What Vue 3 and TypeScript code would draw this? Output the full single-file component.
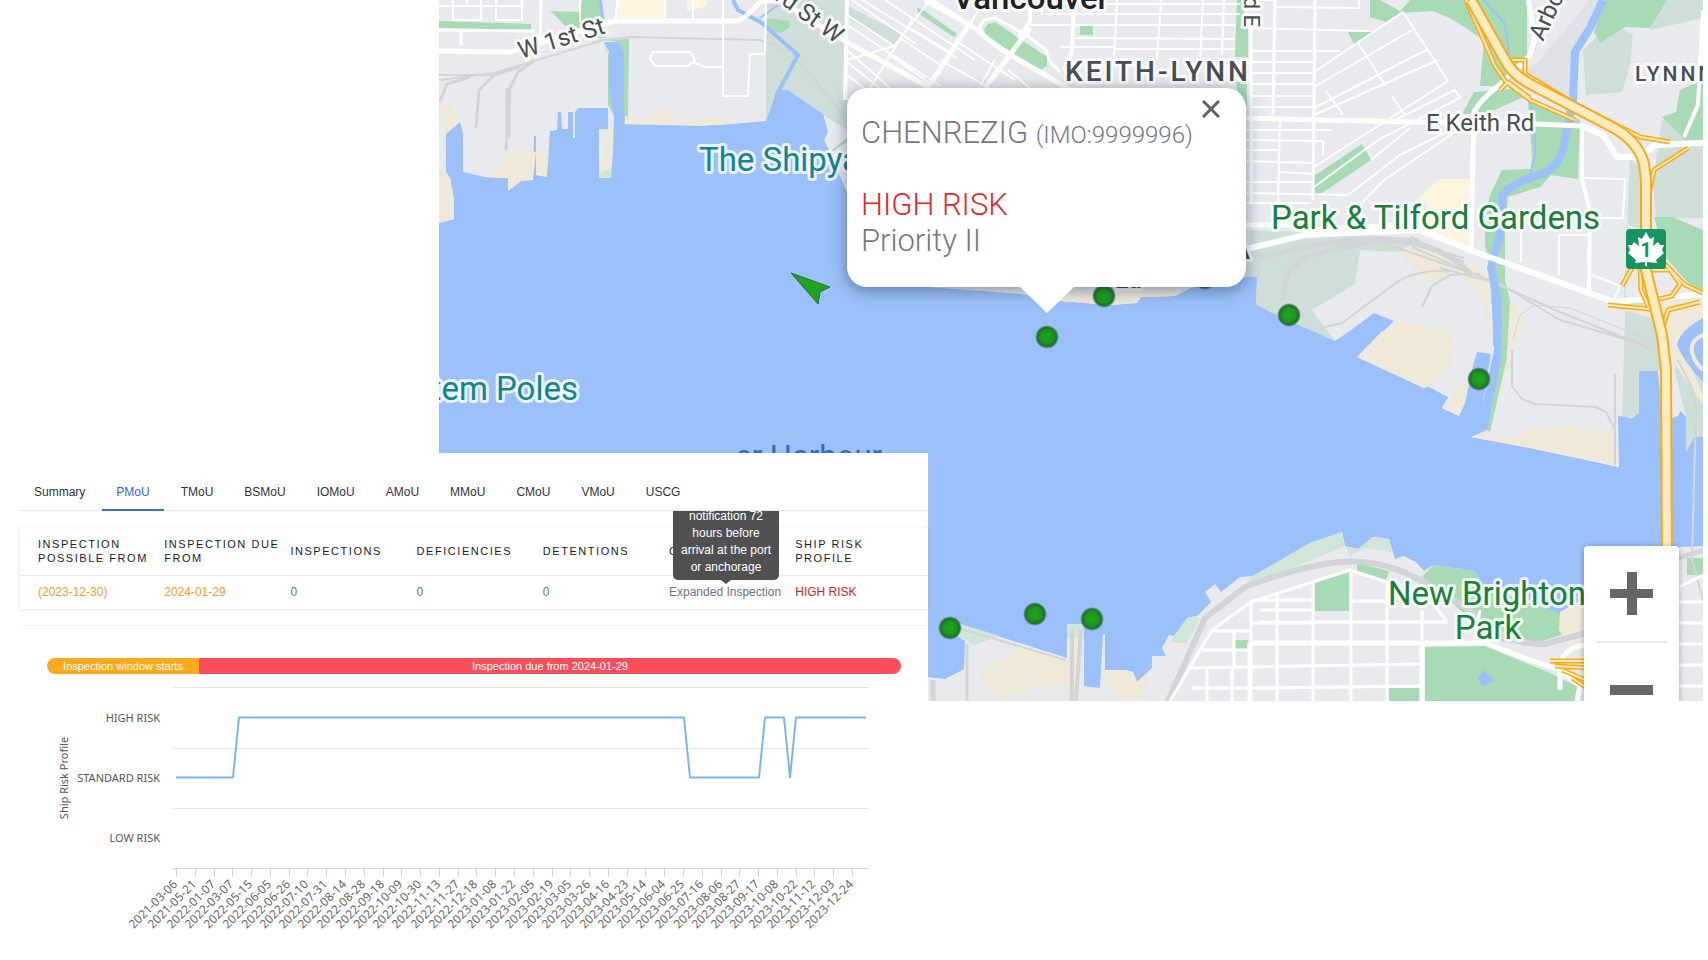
<script setup lang="ts">
import { ref } from 'vue'

interface Shape {
  d: string
}
interface Road extends Shape {
  w: number
}

const tabs = ['Summary', 'PMoU', 'TMoU', 'BSMoU', 'IOMoU', 'AMoU', 'MMoU', 'CMoU', 'VMoU', 'USCG']
const activeTab = ref('PMoU')
const popupOpen = ref(true)

const water =
  'M439 223L454 219L454 200L450 178L446 172L446 134L460 122L463 134L463 172L485 177L508 178L508 191L521 181L533 180L534 136L536 136L536 175L547 177L550 131L557 130L558 112L561 112L562 129L568 129L568 112L573 112L573 138L575 138L575 112L578 108L608 108L608 129L599 129L599 177L611 178L613 150L614 117L609 90L609 52L604 42L619 42L624 52L624 124L660 125L720 125L766 121L777 90L788 90L823 114L828 132L824 140L830 152L850 200L900 285L1020 294L1060 301L1110 305L1137 303L1141 297L1175 296L1193 287L1215 283L1247 277L1257 277L1256 304L1270 312L1335 341L1347 333L1374 313L1394 321L1385 333L1382 331L1357 357L1424 388L1427 386L1448 397L1442 408L1459 416L1465 403L1473 365L1477 352L1491 354L1482 408L1494 350L1491 290L1488 270L1494 268L1502 310L1501 360L1487 430L1471 437L1535 449L1619 467L1618 416L1632 418L1639 413L1639 371L1658 371L1662 418L1672 418L1678 416L1681 411L1686 417L1686 453L1694 437L1703 437L1703 546L1679 547L1590 602L1560 614L1500 587L1482 584L1475 571L1433 565L1424 571L1416 562L1404 556L1395 559L1389 539L1373 537L1358 549L1345 546L1342 532L1310 543L1253 576L1240 577L1221 592L1215 584L1205 592L1211 602L1197 616L1187 618L1174 636L1169 635L1162 648L1166 656L1152 656L1152 668L1137 682L1133 672L1126 670L1105 670L1105 634L1103 634L1100 688L1084 686L1084 624L1067 624L1067 658L960 624L956 635L965 641L964 669L945 679L928 677L439 677Z'

const paleGreen: Shape[] = [
  { d: 'M766 0H847V130L828 118L788 90L777 90L766 121Z' },
  { d: 'M846 5L905 36L894 45L847 18Z' },
  { d: 'M1250 230L1310 232L1420 238L1400 252L1360 250L1355 284L1312 310L1335 341L1270 312L1256 304L1257 277L1246 277Z' },
  { d: 'M1583 50L1613 22L1633 35L1630 65L1622 92L1586 95Z' },
  { d: 'M1662 120L1703 110V218L1656 218L1653 180Z' },
  { d: 'M1630 160L1645 170V230L1628 225L1622 418L1640 415V371H1662L1655 300L1624 300Z' },
  { d: 'M1638 0H1703V18L1650 30Z' },
  { d: 'M1686 417L1675 371L1676 330L1703 380V437L1694 437L1686 453Z' }
]

const mint: Shape[] = [
  { d: 'M1253 576L1310 543L1342 532L1345 546L1300 565L1245 585Z' },
  { d: 'M1345 546L1358 549L1373 537L1389 539L1392 552L1366 548L1350 556Z' },
  { d: 'M956 635L960 624L1000 636L974 645Z' },
  { d: 'M1067 624H1084V638H1067Z' },
  { d: 'M1187 618L1197 616L1200 620L1186 644L1170 642Z' },
  { d: 'M599 173L611 168V178H599Z' }
]

const sand: Shape[] = [
  { d: 'M442 97L450 102L459 121L446 134L446 172L450 178L454 200V219L439 223V176L444 165Z' },
  { d: 'M485 177L512 153L547 151V177L536 175V152L533 180L521 181L508 191V178Z' },
  { d: 'M608 130L613 130L611 168L600 173Z' },
  { d: 'M625 116L642 121L665 107L680 124L713 116L740 123L700 126L625 124Z' },
  { d: 'M1060 294L1100 291L1180 290L1175 296L1141 297L1137 303L1110 305L1060 301Z' },
  { d: 'M1357 357L1394 321L1447 328L1454 346L1450 368L1434 385L1424 388Z' },
  { d: 'M1442 408L1462 382L1470 378L1459 416Z' },
  { d: 'M1400 252L1424 238L1490 274L1491 350L1482 408L1492 345L1480 295L1460 275L1428 284Z' },
  { d: 'M1471 437L1520 436L1524 430L1566 426L1600 433L1613 426L1619 467L1535 449Z' },
  { d: 'M1510 300L1523 320L1515 350L1512 378L1506 370Z' },
  { d: 'M1615 308L1703 298V318L1680 340L1703 395V405L1672 360L1660 320Z' },
  { d: 'M979 676L1019 646L1067 660V686H1040L1000 700Z' },
  { d: 'M1067 638H1078V700H1067Z' },
  { d: 'M1105 670L1133 672L1137 682L1148 672L1143 698L1124 699L1103 684Z' },
  { d: 'M1172 643H1186L1174 652Z' },
  { d: 'M1560 612L1590 595V670L1572 648L1559 630Z' }
]

const retail: Shape[] = [
  { d: 'M619 0H667L664 18H619Z' },
  { d: 'M687 0H707V6L687 11Z' },
  { d: 'M1440 179H1470V246L1420 230L1428 205L1418 198Z' }
]

const parks: Shape[] = [
  { d: 'M439 21L531 24V30L439 28Z' },
  { d: 'M582 0H602L606 38H595L592 30L565 26L560 20L550 11L580 12Z' },
  { d: 'M604 40L629 39L628 118L624 124L624 60L618 42Z' },
  { d: 'M602 42L609 54V90L613 90V114L608 105V54Z' },
  { d: 'M766 18L789 21L790 27L781 33L768 30Z' },
  { d: 'M847 142L828 154L832 150L847 138Z' },
  { d: 'M917 8L922 9L957 34L954 37L918 13Z' },
  { d: 'M984 29L988 24L995 22L1047 57V66L1040 70L1034 69L986 38Z' },
  { d: 'M1080 26H1093V35H1080Z' },
  { d: 'M1237 0H1244V12L1240 28H1248V57H1235Z M1236 82H1247V105H1240Z' },
  { d: 'M1370 0H1380L1402 12L1386 22L1370 17Z' },
  { d: 'M1348 32H1372L1354 44Z' },
  { d: 'M1400 12L1410 0H1527V60L1515 70L1508 86L1480 86L1484 40L1472 32L1450 18L1432 11L1400 13Z' },
  { d: 'M1474 92L1520 88L1528 95L1490 112L1462 114Z' },
  { d: 'M1528 100L1570 115L1580 120L1578 179L1551 175L1540 187L1508 197L1505 230V280L1510 300V345L1490 432L1487 430L1500 350L1497 300L1485 245V225L1490 195L1502 170L1533 169Z' },
  { d: 'M1594 32L1605 0H1667L1650 28L1625 27L1600 43Z' },
  { d: 'M1314 176L1362 144L1371 160L1328 189L1314 197Z' },
  { d: 'M1662 117L1676 112L1680 90L1703 80V140H1685Z' },
  { d: 'M1654 217H1672L1703 230V290L1690 285L1666 258Z' },
  { d: 'M1422 577L1433 565L1475 571L1482 584L1520 600L1560 612L1570 632L1530 645L1490 640L1450 600Z' },
  { d: 'M1425 647L1485 646L1550 673L1580 688L1576 701H1425Z' },
  { d: 'M1315 582L1349 572V611H1315Z' },
  { d: 'M1357 563L1389 571L1386 580L1357 571Z' },
  { d: 'M1389 688H1420V701H1389Z' },
  { d: 'M1235 640H1248L1247 649H1235Z' },
  { d: 'M1176 686L1178 687L1170 701H1166Z' },
  { d: 'M1687 558H1703V575H1687Z' }
]

const rails: Road[] = [
  { d: 'M439 80L495 73L603 40L630 37L760 40L790 52L800 63L846 118', w: 2 },
  { d: 'M439 75L495 75L520 67', w: 2 },
  { d: 'M439 103L447 84L470 77M476 128L479 90L495 74M506 150L510 88L518 72L535 60', w: 3 },
  { d: 'M508 137V88', w: 5 },
  { d: 'M1380 242L1480 276L1560 312L1650 348M1440 268L1500 284L1560 320L1628 340', w: 2 },
  { d: 'M1260 258Q1320 240 1380 240T1470 274', w: 6 },
  { d: 'M1284 300Q1280 270 1310 255L1380 240', w: 5 },
  { d: 'M1320 328L1342 323L1400 280Q1425 268 1450 272M1422 307L1432 286L1450 275L1480 274', w: 2 },
  { d: 'M1410 237L1464 262M1412 243L1464 258M1412 247L1460 268', w: 2 },
  { d: 'M1512 350V386L1522 399L1535 404L1596 407L1606 412L1615 430M1615 374V465', w: 2 },
  { d: 'M1513 340L1520 315L1535 305L1570 308L1650 340', w: 1 },
  { d: 'M1678 360L1693 390L1696 410L1692 560L1703 600', w: 2 },
  { d: 'M955 627L1065 660', w: 2 },
  { d: 'M967 644V701', w: 3 },
  { d: 'M933 680V701', w: 5 },
  { d: 'M1072 630V701M1081 630L1076 701', w: 4 },
  { d: 'M1168 701L1205 618L1245 587Q1300 566 1340 562T1420 580L1470 610Q1500 645 1545 644L1590 632', w: 6 },
  { d: 'M1679 558L1703 550', w: 5 }
]

const roads: Road[] = [
  { d: 'M439 51L510 52L550 40L614 21L736 21Q744 20 754 8L762 1H780L847 42L930 88', w: 5 },
  { d: 'M439 30L535 31M541 0L540 45M461 31V46M618 0L616 21', w: 3 },
  { d: 'M439 6H522M453 0V20H481V0M496 0V20H522V0M467 0V6', w: 2 },
  { d: 'M580 0V22M665 0V20M693 0V20M723 0V96H748L750 54H765L766 1M653 52H690L695 60L688 66H655L650 59ZM692 62L705 67H722', w: 2 },
  { d: 'M847 0L845 100', w: 4 },
  { d: 'M847 15L893 45M852 0L916 44M847 25L940 86M847 50L890 88M847 62L880 88M847 75L864 88M862 0L957 58M885 0L975 60M847 60L894 46L930 0M870 88L912 20M985 0L960 40', w: 2 },
  { d: 'M930 0L978 30Q990 44 1040 72L1070 90M971 22L928 87M925 0L970 25M1030 28L985 88', w: 5 },
  { d: 'M978 30L984 20L995 18L1028 36L1046 50L1050 62L1060 72', w: 3 },
  { d: 'M1030 0V22L1018 38M1074 0L1072 52L1064 70', w: 4 },
  { d: 'M910 28L950 52M900 38L942 66M888 54L928 82M940 60L990 88M955 40L1015 80M966 24L1020 60M995 60L980 86M1008 70L1030 88M1042 0V15', w: 2 },
  { d: 'M1045 14H1240M1045 4H1240M1030 25H1235M1060 47H1115M1074 38L1235 39M1115 49H1235M1117 0L1114 60M1161 0L1157 60M1203 0L1200 60M1224 0L1222 55M1246 0H1275M1250 28L1370 31M1250 51H1340M1250 62H1314M1250 73H1314M1250 84H1314M1250 96H1314M1250 107H1314M1275 7L1359 8V0', w: 2 },
  { d: 'M1251 20V205M1275 0L1273 115M1315 0L1313 200', w: 3 },
  { d: 'M1246 130H1332M1246 140L1322 141M1246 150H1280M1246 161L1314 163M1280 172L1314 174M1246 182H1314M1246 193L1348 195M1246 203H1311M1280 120L1278 205M1323 141V155', w: 2 },
  { d: 'M1314 72L1403 12L1448 81L1314 167M1314 87L1412 30M1314 108L1428 49M1314 115L1438 60M1358 43L1386 86M1326 91L1343 115M1392 96L1404 114M1314 187L1378 140L1460 98L1455 90L1395 120M1348 195L1400 155L1460 125M1362 203L1384 180L1470 122M1371 160L1410 128', w: 2 },
  { d: 'M1246 118L1320 120L1420 122L1535 124L1582 126', w: 5 },
  { d: 'M1246 249L1305 235L1420 230L1470 250L1614 302L1703 294', w: 6 },
  { d: 'M1246 225H1310M1300 230L1420 224', w: 5 },
  { d: 'M1471 250L1474 112Q1480 100 1503 82L1530 55L1535 38L1528 0', w: 5 },
  { d: 'M1582 126V180L1590 210L1589 290', w: 4 },
  { d: 'M1582 126L1603 135L1617 157L1640 157L1655 145L1703 143', w: 6 },
  { d: 'M1684 137L1698 105L1703 10', w: 4 },
  { d: 'M1584 178L1625 179L1623 218H1590M1521 230V262M1559 235V275M1559 235H1590M1590 274L1620 286L1614 300', w: 2 },
  { d: 'M1170 701L1212 630L1251 602L1350 570L1387 582M1480 610L1474 640M1420 585L1447 622', w: 3 },
  { d: 'M1250 643H1485L1530 660L1560 670L1580 685L1577 701M1250 643V701', w: 5 },
  { d: 'M1560 690V665Q1565 645 1590 645M1422 645V701', w: 5 },
  { d: 'M1212 631H1250M1203 650H1250M1191 668L1420 664M1192 688H1280M1251 600V640M1252 600H1312M1252 623H1312M1277 593V701M1313 580V701M1351 572V701M1387 582V701M1260 610H1315M1260 622H1447M1349 601H1389M1260 688L1420 686M1207 669V701M1232 669V701M1234 631V668M1422 610V640', w: 3 },
  { d: 'M1679 587L1703 575M1679 602H1703M1679 623H1703M1679 644H1703M1679 665H1703M1679 686H1703', w: 3 }
]

const river: Road[] = [
  { d: 'M1603 0L1590 28L1575 52L1573 100L1563 150Q1558 166 1545 173Q1512 182 1502 196L1500 235L1491 268L1498 300L1497 345', w: 8 },
  { d: 'M1484 0L1505 24L1509 55', w: 2 },
  { d: 'M1527 96L1535 115V155L1530 175', w: 2 },
  { d: 'M600 0L603 20', w: 3 },
  { d: 'M733 0L738 10L762 23L798 55L776 96', w: 4 },
  { d: 'M760 18L778 5', w: 2 }
]

const rampPaths: Shape[] = [
  { d: 'M1466 0L1495 66L1506 82L1530 100L1575 120' },
  { d: 'M1512 60L1525 60V74L1575 104L1640 137L1670 142' },
  { d: 'M1500 90L1508 82L1530 98' },
  { d: 'M1650 190L1654 170L1688 148' },
  { d: 'M1640 265L1641 290L1650 310M1632 268L1622 286' },
  { d: 'M1663 262L1685 285L1703 293M1652 270L1670 270L1680 284L1672 296L1655 300' },
  { d: 'M1608 305L1650 309M1662 330L1668 310L1700 302' },
  { d: 'M1550 661H1590M1555 666L1590 668M1562 670L1590 682M1572 678L1590 690' }
]

const highway =
  'M1471 0L1505 60Q1512 74 1530 84L1610 126Q1638 140 1644 164L1646 180V270L1662 335L1666 370L1667 560'

const markers = [
  { x: 1205, y: 278 },
  { x: 1104, y: 296 },
  { x: 1289, y: 315 },
  { x: 1479, y: 379 },
  { x: 1047, y: 337 },
  { x: 950, y: 628 },
  { x: 1035, y: 614 },
  { x: 1092, y: 619 }
]

const dates = [
  '2021-03-06', '2021-05-21', '2022-01-07', '2022-03-07', '2022-05-15', '2022-06-05', '2022-06-26',
  '2022-07-10', '2022-07-31', '2022-08-14', '2022-08-28', '2022-09-18', '2022-10-09', '2022-10-30',
  '2022-11-13', '2022-11-27', '2022-12-18', '2023-01-08', '2023-01-22', '2023-02-05', '2023-02-19',
  '2023-03-05', '2023-03-26', '2023-04-16', '2023-04-23', '2023-05-14', '2023-06-04', '2023-06-25',
  '2023-07-16', '2023-08-06', '2023-08-27', '2023-09-17', '2023-10-08', '2023-10-22', '2023-11-12',
  '2023-12-03', '2023-12-24'
]
const firstTick = 156
const lastTick = 832
const ticks = dates.map((label, i) => ({
  label,
  x: Math.round(firstTick + ((lastTick - firstTick) * i) / (dates.length - 1))
}))
const levels = [
  { label: 'HIGH RISK', y: 42 },
  { label: 'STANDARD RISK', y: 102 },
  { label: 'LOW RISK', y: 162 }
]
</script>

<template>
  <main class="page">
    <section class="map" aria-label="Ship map">
      <svg class="map-canvas" viewBox="439 0 1264 701" preserveAspectRatio="xMidYMid slice">
        <defs>
          <radialGradient id="dot">
            <stop offset="0" stop-color="#1fa51f" />
            <stop offset="0.55" stop-color="#1c961e" />
            <stop offset="0.78" stop-color="#1d7420" />
            <stop offset="0.86" stop-color="#2c6a3c" stop-opacity="0.8" />
            <stop offset="1" stop-color="#3c6a70" stop-opacity="0" />
          </radialGradient>
        </defs>
        <rect x="439" y="0" width="1264" height="701" fill="#e8eaed" />
        <path d="M1540 60L1590 0H1603L1575 52L1572 100L1525 72Z" fill="#dfe1e6" />
        <path v-for="s in paleGreen" :key="s.d" :d="s.d" fill="#cfded8" />
        <path v-for="s in parks" :key="s.d" :d="s.d" fill="#a8dab5" />
        <path :d="water" fill="#9cc0f9" />
        <path v-for="s in mint" :key="s.d" :d="s.d" fill="#d0e6da" />
        <path v-for="s in sand" :key="s.d" :d="s.d" fill="#efe9d9" />
        <path v-for="s in retail" :key="s.d" :d="s.d" fill="#fef5df" />
        <path d="M1677 345Q1680 330 1703 318V382Q1684 362 1677 345Z" fill="#9cc0f9" />
        <path d="M1703 335Q1690 340 1692 352Q1694 362 1703 370" fill="none" stroke="#efe9d9" stroke-width="4" />
        <path d="M1477 678L1486 669V673L1494 680L1483 687Z" fill="#9cc0f9" />
        <g fill="none" stroke-linejoin="round">
          <path v-for="r in rails" :key="r.d" :d="r.d" :stroke-width="r.w" stroke="#d2d5d8" />
          <path v-for="r in river" :key="r.d" :d="r.d" :stroke-width="r.w" stroke="#9cc0f9" />
          <path v-for="r in roads" :key="r.d" :d="r.d" :stroke-width="r.w" stroke="#ffffff" />
          <path v-for="r in rampPaths" :key="r.d" :d="r.d" stroke-width="5" stroke="#f9ab17" />
          <path v-for="r in rampPaths" :key="r.d + 'in'" :d="r.d" stroke-width="2" stroke="#ffe9b8" />
          <path :d="highway" stroke-width="12" stroke="#f9ab17" />
          <path :d="highway" stroke-width="8" stroke="#ffebc2" />
        </g>

        <g class="labels">
          <text x="521" y="59" font-size="24" fill="#4a4d51" transform="rotate(-17 521 59)">W 1st St</text>
          <text x="836" y="44" font-size="24" fill="#4a4d51" text-anchor="end" transform="rotate(36 836 44)">3rd St W</text>
          <text x="1031" y="9" font-size="33" font-weight="500" fill="#202124" text-anchor="middle">Vancouver</text>
          <text x="1244" y="27" font-size="22" fill="#4a4d51" text-anchor="end" transform="rotate(90 1244 27)">rd E</text>
          <text class="spaced" x="1065" y="81" font-size="28" font-weight="500" fill="#4a4d51">KEITH-LYNN</text>
          <text class="spaced" x="1635" y="81" font-size="21" font-weight="500" fill="#4a4d51">LYNNMOUR</text>
          <text x="1426" y="131" font-size="24" fill="#4a4d51">E Keith Rd</text>
          <text x="1543" y="42" font-size="24" fill="#4a4d51" transform="rotate(-65 1543 42)">Arbor</text>
          <text x="1271" y="229" font-size="33" fill="#188038">Park &amp; Tilford Gardens</text>
          <text x="699" y="171" font-size="33" fill="#12858d">The Shipyards</text>
          <text x="578" y="400" font-size="33" fill="#12858d" text-anchor="end">Totem Poles</text>
          <text x="1388" y="605" font-size="33" fill="#188038">New Brighton</text>
          <text x="1488" y="639" font-size="33" fill="#188038" text-anchor="middle">Park</text>
          <text class="plain" x="882" y="467" font-size="31" fill="#3068c8" text-anchor="end">er Harbour</text>
          <text x="1250" y="259" font-size="24" font-weight="500" fill="#3c4043" text-anchor="end">A</text>
          <text x="1115" y="288" font-size="24" font-weight="500" fill="#3c4043">Ea</text>
        </g>

        <g>
          <rect x="1626" y="229" width="40" height="40" rx="4" fill="#189464" />
          <path
            d="M1646 232L1650 239L1654 237L1653 246L1658 242L1660 245L1664 245L1662 250L1664 253L1656 260L1657 263L1647 262V266H1645V262L1635 263L1636 260L1628 253L1630 250L1628 245L1632 245L1634 242L1639 246L1638 237L1642 239Z"
            fill="#ffffff"
          />
          <text x="1646" y="257" font-size="20" font-weight="700" fill="#189464" text-anchor="middle">1</text>
        </g>

        <circle v-for="m in markers" :key="m.x" :cx="m.x" :cy="m.y" r="12" fill="url(#dot)" />
        <path d="M791 273L830 287L820 292L818 304Z" fill="#22a022" stroke="#28703a" stroke-width="1" />
      </svg>

      <article v-if="popupOpen" class="popup">
        <button class="popup-close" type="button" aria-label="Close" @click="popupOpen = false">
          <svg viewBox="0 0 18 18" width="18" height="18" fill="none" stroke="#5f6368" stroke-width="3">
            <path d="M1 1L17 17M17 1L1 17" />
          </svg>
        </button>
        <p class="ship">CHENREZIG <span class="imo">(IMO:9999996)</span></p>
        <p class="risk">HIGH RISK</p>
        <p>Priority II</p>
      </article>

      <div class="zoom">
        <button type="button" aria-label="Zoom in">
          <svg viewBox="0 0 43 43" width="43" height="43" fill="#666666">
            <path d="M17 0H27V17H43V26H27V43H17V26H0V17H17Z" />
          </svg>
        </button>
        <button type="button" aria-label="Zoom out">
          <svg viewBox="0 0 43 43" width="43" height="43" fill="#666666"><path d="M0 17H43V27H0Z" /></svg>
        </button>
      </div>
    </section>

    <section class="panel">
      <nav class="tabs">
        <button
          v-for="t in tabs"
          :key="t"
          type="button"
          :class="{ active: t === activeTab }"
          @click="activeTab = t"
        >{{ t }}</button>
      </nav>

      <table>
        <thead>
          <tr>
            <th>INSPECTION<br />POSSIBLE FROM</th>
            <th>INSPECTION DUE<br />FROM</th>
            <th>INSPECTIONS</th>
            <th>DEFICIENCIES</th>
            <th>DETENTIONS</th>
            <th>C</th>
            <th class="last">SHIP RISK<br />PROFILE</th>
          </tr>
        </thead>
        <tbody>
          <tr>
            <td class="due">(2023-12-30)</td>
            <td class="due">2024-01-29</td>
            <td>0</td>
            <td>0</td>
            <td>0</td>
            <td>
              <span class="hint">Expanded Inspection<span class="tip" role="tooltip"><span class="tip-text">notification 72 hours before arrival at the port or anchorage</span></span></span>
            </td>
            <td class="high">HIGH RISK</td>
          </tr>
        </tbody>
      </table>

      <div class="profile">
        <div class="window">
          <span class="starts">Inspection window starts</span>
          <span class="from">Inspection due from 2024-01-29</span>
        </div>
        <svg class="chart" viewBox="0 0 908 264" role="img" aria-label="Ship Risk Profile">
          <g stroke="#e6e6e6" stroke-width="1">
            <path d="M153 11.5H849M153 72.5H849M153 132.5H849" />
          </g>
          <path d="M153 192.5H849" stroke="#ccd6eb" />
          <path v-for="t in ticks" :key="t.label" :d="`M${t.x + 0.5} 193V201`" stroke="#ccd6eb" />
          <path
            d="M156 101.5H213L219 41.5H664L670 101.5H739L745 41.5H764L770 101.5L776 41.5H846"
            fill="none"
            stroke="#7cb5ec"
            stroke-width="2"
            stroke-linejoin="round"
          />
          <g class="axis">
            <text v-for="l in levels" :key="l.label" x="140" :y="l.y + 4" text-anchor="end">{{ l.label }}</text>
            <text x="48" y="102" text-anchor="middle" transform="rotate(-90 48 102)">Ship Risk Profile</text>
          </g>
          <g class="dates">
            <text
              v-for="t in ticks"
              :key="t.label"
              :x="t.x + 2"
              y="209"
              text-anchor="end"
              :transform="`rotate(-45 ${t.x + 2} 209)`"
            >{{ t.label }}</text>
          </g>
        </svg>
      </div>
    </section>
  </main>
</template>

<style>
body {
  background: #ffffff;
}
</style>

<style scoped>
.page {
  display: grid;
  grid-template-columns: 439fr 489fr 775fr 5px;
  grid-template-rows: 453px 248px auto;
  overflow: hidden;
  font-family: 'Liberation Sans', Arial, sans-serif;
}
button {
  border: 0;
  background: none;
  padding: 0;
  font: inherit;
  color: inherit;
  cursor: pointer;
}
.map {
  grid-column: 2 / 4;
  grid-row: 1 / 3;
  position: relative;
  overflow: hidden;
  font-family: Roboto, sans-serif;
}
.map-canvas {
  display: block;
  width: 100%;
  height: 100%;
}
.labels text {
  paint-order: stroke;
  stroke: rgba(255, 255, 255, 0.8);
  stroke-width: 6px;
  stroke-linejoin: round;
}
.labels .plain {
  stroke: none;
}
.spaced {
  letter-spacing: 3px;
}
.popup {
  position: absolute;
  left: 408px;
  top: 88px;
  width: 399px;
  height: 199px;
  box-sizing: border-box;
  padding: 27px 14px 0;
  border-radius: 20px;
  background: #ffffff;
  box-shadow: 0 3px 16px rgba(20, 40, 80, 0.5);
  font-size: 31px;
  font-weight: 300;
  line-height: 36px;
  color: #747888;
}
.popup::after {
  content: '';
  position: absolute;
  left: 172px;
  top: 198px;
  width: 56px;
  height: 27px;
  background: #ffffff;
  clip-path: polygon(0 0, 100% 0, 50% 100%);
}
.popup p {
  margin: 0;
}
.popup .ship {
  margin-bottom: 34px;
}
.imo {
  font-size: 24px;
}
.popup .risk {
  color: #e5252d;
}
.popup-close {
  position: absolute;
  right: 26px;
  top: 12px;
  line-height: 0;
}
.zoom {
  position: absolute;
  right: 24px;
  bottom: -35px;
  width: 95px;
  border-radius: 4px;
  background: #ffffff;
  box-shadow: 0 1px 6px rgba(0, 0, 0, 0.3);
}
.zoom button {
  display: flex;
  align-items: center;
  justify-content: center;
  width: 71px;
  height: 95px;
  margin: 0 12px;
}
.zoom button + button {
  border-top: 2px solid #e6e6e6;
}
.panel {
  grid-column: 1 / 3;
  grid-row: 2 / 4;
  position: relative;
  padding: 24px 0 20px 20px;
  background: #ffffff;
  font-size: 12px;
  line-height: 16px;
}
.tabs {
  display: flex;
  gap: 3px;
  border-bottom: 1px solid #e8e8ea;
  color: #303240;
}
.tabs button {
  padding: 7px 14px 9px;
  margin-bottom: -1px;
  border-bottom: 2px solid transparent;
}
.tabs .active {
  color: #2f66de;
  border-color: #3a6ad8;
}
table {
  width: 100%;
  margin-top: 17px;
  table-layout: fixed;
  border-collapse: collapse;
  box-shadow: 0 1px 4px rgba(0, 0, 0, 0.12);
  color: #6e7282;
}
th,
td {
  width: 13.9%;
  box-sizing: border-box;
  padding: 0 0 0 18px;
  text-align: left;
  white-space: nowrap;
}
th {
  height: 47px;
  font-size: 11px;
  font-weight: 400;
  line-height: 14px;
  letter-spacing: 0.14em;
  color: #191c28;
}
th.last {
  width: auto;
}
td {
  height: 34px;
  border-top: 1px solid #e8e8ea;
}
.due {
  color: #fb9a2c;
}
.high {
  color: #e01b24;
}
.hint {
  position: relative;
}
.tip {
  position: absolute;
  left: 4px;
  bottom: 19px;
  width: 106px;
  height: 69px;
  border-radius: 0 0 5px 5px;
  background: #505050;
  color: #ffffff;
  line-height: 17px;
  text-align: center;
  white-space: normal;
}
.tip-text {
  display: flex;
  flex-direction: column;
  justify-content: flex-end;
  height: 100%;
  box-sizing: border-box;
  padding: 0 6px 4px;
  overflow: hidden;
}
.tip::after {
  content: '';
  position: absolute;
  left: 48px;
  top: 100%;
  border: 5px solid transparent;
  border-top: 4px solid #505050;
  border-bottom: 0;
}
.profile {
  margin-top: 16px;
  border-top: 1px solid #f6f6f7;
  padding-top: 32px;
}
.window {
  display: flex;
  height: 16px;
  margin: 0 27px;
  border-radius: 8px;
  overflow: hidden;
  color: #ffffff;
  font-size: 11px;
  text-align: center;
}
.starts {
  flex: 152;
  background: #fda91e;
}
.from {
  flex: 702;
  background: #f84f5a;
}
.chart {
  display: block;
  width: 100%;
  margin-top: 2px;
  font-family: 'Noto Sans', sans-serif;
}
.axis {
  font-size: 11px;
  fill: #555555;
}
.dates {
  font-size: 12px;
  fill: #666666;
}
</style>
